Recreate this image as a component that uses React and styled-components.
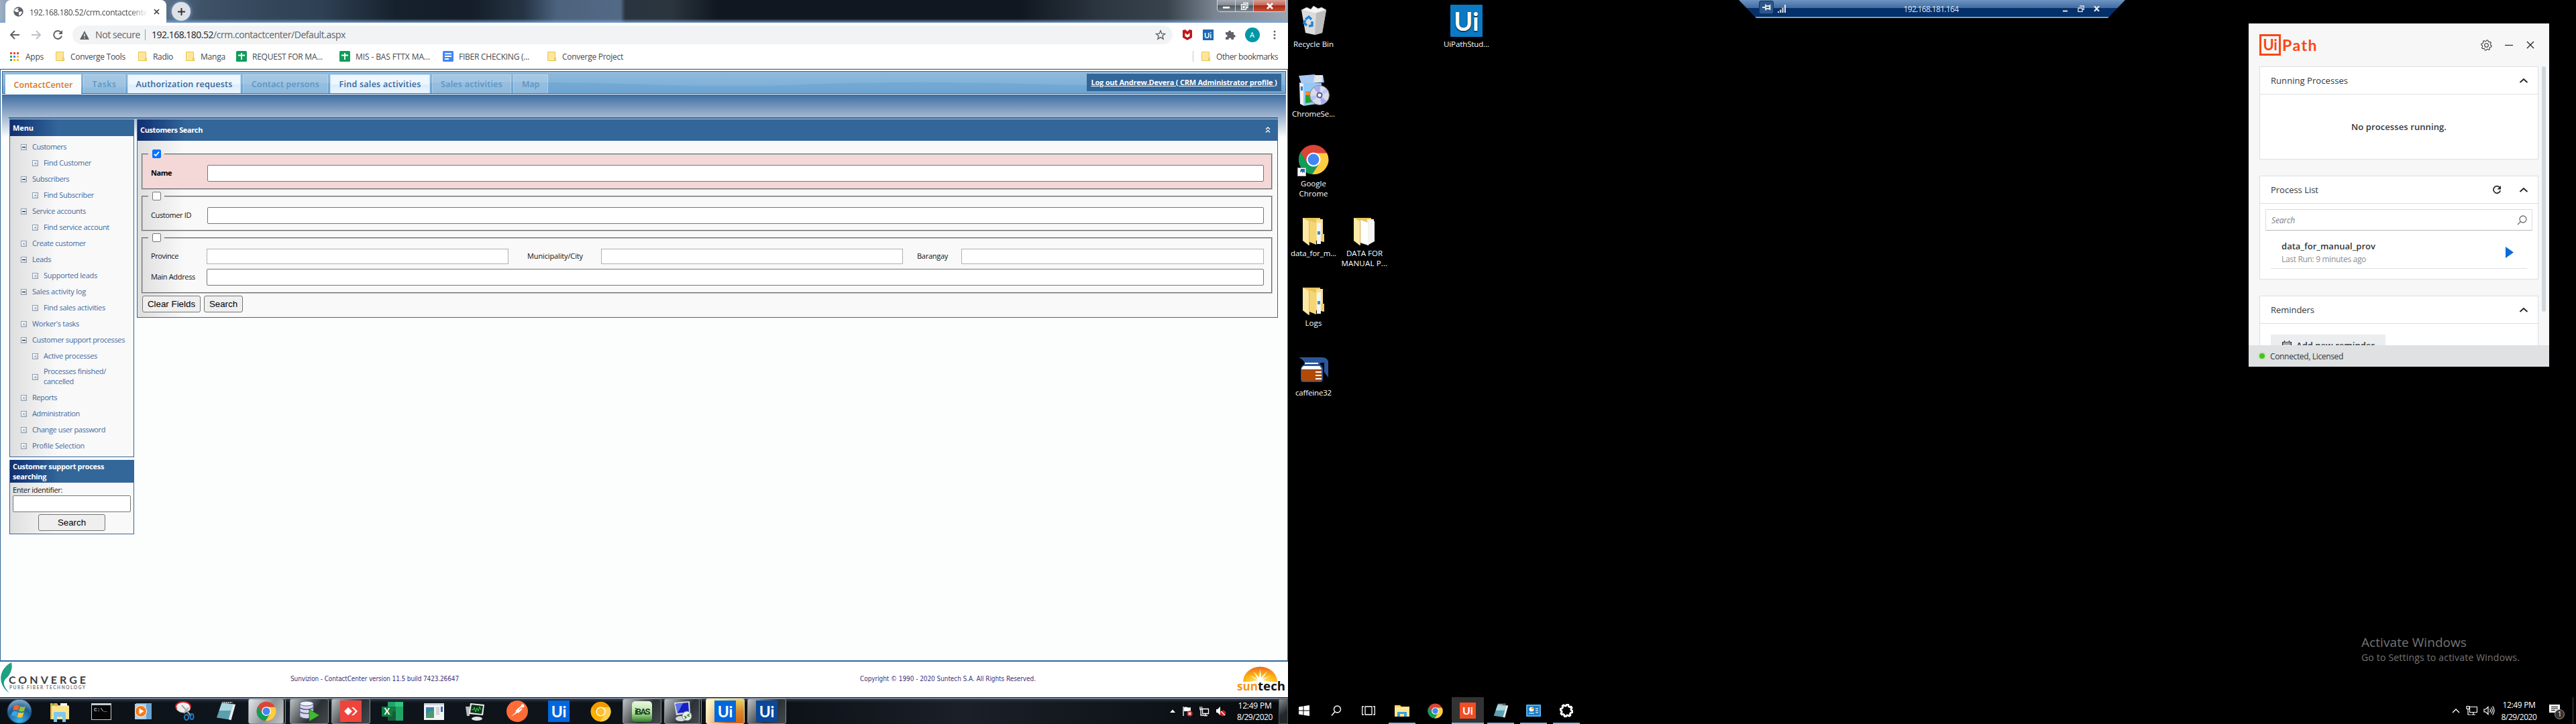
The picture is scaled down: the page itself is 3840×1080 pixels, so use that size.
import React, { useLayoutEffect, useRef } from "react";
import styled, { createGlobalStyle, css } from "styled-components";

const Global = createGlobalStyle`
  * { box-sizing: border-box; }
  body { margin: 0; background: #000; font-family: "Open Sans", "Noto Sans", sans-serif; }
`;

/* ---------- text that tracks itself to a given measure ---------- */
const TextSpan = styled.span`
  display: inline-block;
  width: max-content;
  white-space: nowrap;
  flex: none;
  line-height: ${(p) => p.$lh || 15}px;
  font-size: ${(p) => p.$size || 12}px;
  font-weight: ${(p) => p.$weight || 400};
  color: ${(p) => p.$color || "inherit"};
  font-style: ${(p) => (p.$italic ? "italic" : "normal")};
  font-family: ${(p) => p.$font || "inherit"};
`;
function Text({ w, size, weight, color, italic, font, lh, children }) {
  const ref = useRef(null);
  useLayoutEffect(() => {
    const el = ref.current;
    if (!w || !el) return;
    el.style.letterSpacing = "0px";
    const n = el.textContent.length;
    const natural = el.getBoundingClientRect().width;
    const gap = (w - natural) / n;
    el.style.letterSpacing = gap.toFixed(3) + "px";
  }, [w, children]);
  return (
    <TextSpan ref={ref} $size={size} $weight={weight} $color={color} $italic={italic} $font={font} $lh={lh}>
      {children}
    </TextSpan>
  );
}

/* ---------- shared drawings ---------- */
const Svg = ({ w = 16, h, vb, children }) => (
  <svg width={w} height={h || w} viewBox={vb || `0 0 ${w} ${h || w}`} display="block">
    {children}
  </svg>
);
const ChromeIcon = ({ size = 32, canary }) => {
  const c = canary ? ["#f29900", "#f9b200", "#fdd04e", "#fbc02d"] : ["#db4437", "#0f9d58", "#ffcd40", "#4285f4"];
  return (
    <Svg w={size} vb="0 0 48 48">
      <circle cx="24" cy="24" r="23" fill={c[0]} />
      <path d="M4 12.5 A23 23 0 0 0 22 46.9 L33 29 L24 24 L14 29 Z" fill={c[1]} />
      <path d="M45 14 A23 23 0 0 1 22 46.9 L33.5 29.5 L33 19 L24 14 Z" fill={c[2]} />
      <circle cx="24" cy="24" r="11" fill="#fff" />
      <circle cx="24" cy="24" r="8.8" fill={c[3]} />
    </Svg>
  );
};
const NotepadIcon = ({ size = 32 }) => (
  <Svg w={size} vb="0 0 32 32">
    <path d="M12 3 L31 5 L24 30 L20 29 Z" fill="#e9edf0" />
    <path d="M9 3 L27 5 L20 29 L1 26 Z" fill="#5b9fb0" />
    <path d="M9 3 L27 5 L24 15 L5 15 Z" fill="#a9d6dc" />
    <path d="M10 2 h16" stroke="#ddd" strokeWidth="2" strokeDasharray="2 1" />
  </Svg>
);
const ExplorerIcon = ({ size = 32 }) => (
  <Svg w={size} vb="0 0 32 32">
    <path d="M2 4 h10 l2 3 h15 v21 H2 Z" fill="#d9b14c" />
    <path d="M4 8 h26 v20 H4 Z" fill="#fbe38e" />
    <path d="M17 4 h10 v4 H17 Z" fill="#f6f6f6" />
    <path d="M5 4 h3 v2 H5 Z" fill="#3aa03a" />
    <path d="M7 32 V19 q0-2 2-2 h14 q2 0 2 2 V32 h-5 v-8 h-8 v8 Z" fill="#7cc8ee" />
  </Svg>
);

/* ---------- screens ---------- */
const Desk = styled.div`display: flex; width: 3840px; height: 1080px; overflow: hidden; background: #000;`;
const LeftScreen = styled.div`width: 1920px; height: 1080px; display: flex; flex-direction: column; background: #fff; overflow: hidden;`;

/* ---------- browser chrome ---------- */
const TitleBar = styled.div`
  height: 34px; display: flex; align-items: flex-start; padding-left: 8px;
  background:
    linear-gradient(180deg, transparent 28px, rgba(120, 165, 215, 0.75) 33px, #8fb0d2 34px),
    linear-gradient(90deg, #9fb0c2 0, #8ea4bd 8px, #5a6f86 250px, #3e5268 300px, #34465a 400px, #2e4054 480px, #16212d 590px,
      #141d28 700px, #253444 780px, #4c627d 830px, #536a86 925px, #2a343f 932px, #2b353e 1000px, #101720 1070px,
      #101720 1520px, #2c3640 1640px, #39434d 1740px, #7a8490 1810px, #9aa5b1 1920px);
`;
const Tab = styled.div`
  width: 240px; height: 34px; background: #fff; border-radius: 8px 8px 0 0;
  display: flex; align-items: center; gap: 9px; padding: 0 0 0 12px; color: #45494d;
`;
const TabTitle = styled.div`width: 176px; overflow: hidden; mask-image: linear-gradient(90deg, #000 150px, transparent 176px);`;
const NewTab = styled.div`
  width: 28px; height: 28px; margin: 3px 0 0 8px; border-radius: 50%; background: #dee1e6;
  display: flex; align-items: center; justify-content: center; box-shadow: 0 0 5px 1px #6f9ccb;
`;
const WinButtons = styled.div`
  display: flex; margin-left: auto; margin-right: 3px; height: 18px; border: 1px solid #d5dbe2; border-top: 0; border-radius: 0 0 5px 5px; overflow: hidden;
`;
const WinButton = styled.div`
  width: ${(p) => (p.$close ? 47 : 27)}px; display: flex; align-items: center; justify-content: center;
  border-right: ${(p) => (p.$close ? 0 : "1px solid #c7ced6")};
  background: ${(p) => p.$close ? "linear-gradient(#d9a095, #c4685a 45%, #a92b16 50%, #c9503a)" : "linear-gradient(#a7adb4, #828a93 45%, #505961 50%, #79838c)"};
`;
const AddressRow = styled.div`height: 36px; display: flex; align-items: center; padding-left: 14px; gap: 16px; background: #fff;`;
const Omnibox = styled.div`
  width: 1640px; height: 28px; margin-left: -2px; border-radius: 14px; background: #f1f3f4; display: flex; align-items: center; padding: 0 10px 0 11px; color: #5f6368;
`;
const OmniSeparator = styled.div`width: 1px; height: 16px; background: #9aa0a6; margin: 0 9px 0 7px;`;
const WarnBox = styled.div`width: 23px;`;
const Push = styled.div`margin-left: auto;`;
const Extensions = styled.div`display: flex; align-items: center; margin-left: -1px; height: 28px;`;
const ExtSlot = styled.div`width: ${(p) => p.$w}px; display: flex; justify-content: center;`;
const Avatar = styled.div`width: 22px; height: 22px; border-radius: 50%; background: #0097a7; color: #fff; font-size: 11px; line-height: 22px; text-align: center;`;
const UiTile = styled.div`
  width: ${(p) => p.$s}px; height: ${(p) => p.$s}px; background: ${(p) => p.$bg}; color: #fff; display: flex; align-items: center; justify-content: center; flex: none;
  font: 700 ${(p) => p.$f || p.$s * 0.68}px/1 "Lato", "Open Sans", sans-serif; border-radius: ${(p) => p.$r || 0}px;
`;
const BookmarkBar = styled.div`height: 33px; padding: 0 15px; border-bottom: 1px solid #d6d8dc; display: flex; align-items: center; color: #45494d; background: #fff; padding-bottom: 4px;`;
const Bookmark = styled.div`display: flex; align-items: center; width: ${(p) => p.$w}px; gap: ${(p) => p.$gap}px;`;
const BookDivider = styled.div`margin-left: auto; width: 1px; height: 16px; background: #c4c7cb; margin-right: 12px;`;

const Folder = () => (
  <Svg w={13} h={14}><path d="M.5 .5 h11 v10 l1 1 v2 H.5Z" fill="#ffe69b" stroke="#e8c64e" /><path d="M10.5 13 v-3.5 h2 v4z" fill="#ffe69b" stroke="#e3b736" strokeWidth=".8" /></Svg>
);
const Sheet = () => (
  <Svg w={16}><rect width="16" height="16" rx="1.5" fill="#0f9d58" /><path d="M3 6.5 h10 M8 3 v10" stroke="#fff" strokeWidth="1.8" /></Svg>
);
const Doc = () => (
  <Svg w={16}><rect width="16" height="16" rx="1.5" fill="#4285f4" /><path d="M3 4.2h10M3 8h10M3 12h6" stroke="#fff" strokeWidth="1.8" /></Svg>
);
const AppsGrid = () => (
  <Svg w={13}>
    {["#ea4335", "#ea4335", "#ea4335", "#34a853", "#4285f4", "#fbbc04", "#34a853", "#fbbc04", "#fbbc04"].map((c, i) => (
      <rect key={i} x={(i % 3) * 5} y={Math.floor(i / 3) * 5} width="3" height="3" fill={c} />
    ))}
  </Svg>
);
const bookmarks = [
  ["Apps", 27, AppsGrid, 68, 10], ["Converge Tools", 82, Folder, 123, 9], ["Radio", 30, Folder, 71, 9], ["Manga", 37, Folder, 75, 9],
  ["REQUEST FOR MA...", 105, Sheet, 154, 8], ["MIS - BAS FTTX MA...", 111, Sheet, 154, 8], ["FIBER CHECKING (...", 105, Doc, 156, 8], ["Converge Project", 91, Folder, 120, 9],
];

/* ---------- CRM page ---------- */
const Page = styled.div`height: 882px; border: 1px solid #336699; border-bottom: 0; padding: 2px 2px 0; background: #fcfefe; display: flex; flex-direction: column;`;
const Strip = styled.div`
  height: 34px; border: 1px solid #336699; display: flex; align-items: flex-end; position: relative; background: linear-gradient(#8fbadc, #84b3d9 50%, #6fa8d4);
  flex: none;
`;
const Wave = styled.svg`position: absolute; left: 0; top: 0;`;
const NavTabs = styled.div`display: flex; align-items: flex-end; gap: 3px; padding-left: 4px; position: relative; height: 100%;`;
const NavTab = styled.div`
  width: ${(p) => p.$w}px; height: ${(p) => (p.$kind === "active" ? 29 : 28)}px; display: flex; justify-content: center; align-items: center;
  border: solid rgba(255, 255, 255, 0.25); border-width: 1px 1px 0 1px;
  ${(p) => p.$kind === "active" && css`background: #fafdfe; color: #e0751a; margin-bottom: -1px; border-color: #fff;`}
  ${(p) => p.$kind === "on" && css`background: linear-gradient(#eef6fe 50%, #dcecfb 52%, #e9f4fe); color: #336699; border-color: #c5e0f5;`}
  ${(p) => p.$kind === "off" && css`background: rgba(255, 255, 255, 0.24); color: #5b96c6;`}
`;
const LogOut = styled.div`margin: 0 6px 3px auto; padding-bottom: 2px; position: relative; width: 290px; height: 26px; background: #336699; display: flex; align-items: center; justify-content: center; text-decoration: underline; color: #fff;`;
const Main = styled.div`
  flex: 1; margin-top: 1px; padding: 34px 12px 0 10px;
  background: linear-gradient(#3e6ea1 0, #a5b8d2 34px, #fcfefe 64px);
`;
const Columns = styled.div`border-top: 2px solid #336699; padding: 1px 0 0 1px; display: flex; gap: 4px; align-items: flex-start; background: linear-gradient(#b7cfe8 1px, transparent 1px);`;
const SideColumn = styled.div`width: 186px; display: flex; flex-direction: column; gap: 4px;`;
const Panel = styled.div`border: 1px solid #336699; border-top: 0; background: linear-gradient(90deg, #dedede 0, #e3e3e3 12px, #f9f9f9 70px); ${(p) => p.$grow && css`flex: 1;`}`;
const PanelHead = styled.div`
  height: ${(p) => p.$h}px; background: linear-gradient(90deg, #11306f 0, #173a7a 15px, #336699 72px); color: #fff; padding: 0 4px 1px;
  display: flex; align-items: center; justify-content: space-between;
`;
const HeadLines = styled.div`display: flex; flex-direction: column;`;
const MenuList = styled.div`padding: 4px 0 4px; display: flex; flex-direction: column; color: #3f6aa0;`;
const MenuRow = styled.div`display: flex; align-items: center; height: ${(p) => (p.$tall ? 38 : 24)}px; padding-left: ${(p) => (p.$sub ? 33 : 16)}px; gap: 8px;`;
const MenuLabel = styled.div`display: flex; flex-direction: column; padding-bottom: 2px;`;
const Bullet = styled.div`width: 9px; height: 9px; border: 1px solid #8d9fb4; background: linear-gradient(135deg, #fff, #c9ced6); display: flex; align-items: center; justify-content: center;`;
const BulletMark = styled.div`width: ${(p) => (p.$minus ? 5 : 1)}px; height: 1px; background: #000;`;
const SearchBody = styled.div`padding: 4px 4px; display: flex; flex-direction: column; height: 76px;`;
const Field = styled.div`height: ${(p) => p.$h || 25}px; width: ${(p) => (p.$w ? p.$w + "px" : "auto")}; flex: ${(p) => (p.$w ? "none" : 1)}; border: 1px solid ${(p) => (p.$pale ? "#b0b0b0" : "#767676")}; background: #fff; border-radius: ${(p) => (p.$pale ? 0 : 2)}px;`;
const Button = styled.div`
  width: ${(p) => p.$w}px; height: 25px; border: 1px solid #767676; border-radius: 3px; background: #efefef; color: #000;
  font: 13.33px/23px "Liberation Sans", Arial, sans-serif; text-align: center;
`;
const SideField = styled.div`display: flex; height: 25px; margin: 1px 0 3px;`;
const Center = styled.div`display: flex; justify-content: center;`;
const Form = styled.div`padding: 13px 7px 7px 6px; display: flex; flex-direction: column; gap: 3px;`;
const Group = styled.fieldset`
  margin: 0; padding: 10px 11px 0 12px; height: ${(p) => p.$h}px; border: 2px groove #c0c0c0; ${(p) => p.$hot && css`background: #f4d8d8;`}
`;
const Legend = styled.legend`margin-left: -4px; padding: 0 5px 0 6px; height: 13px; background: transparent; line-height: 0;`;
const Check = styled.div`width: 13px; height: 13px; border-radius: 2px; border: 1px solid ${(p) => (p.$on ? "#0075ff" : "#767676")}; background: ${(p) => (p.$on ? "#0075ff" : "#fff")};`;
const FormRow = styled.div`display: flex; align-items: center; height: ${(p) => p.$h || 25}px; margin-bottom: 7px;`;
const LabelBox = styled.div`width: ${(p) => p.$w}px; padding: 0 0 3px ${(p) => p.$pl || 0}px; flex: none; color: #111; display: flex;`;
const ButtonRow = styled.div`display: flex; gap: 5px; padding-left: 1px;`;
const FooterLine = styled.div`height: 2px; background: #336699;`;
const Footer = styled.div`height: 53px; background: #fff; display: flex; align-items: center; color: #40347e;`;
const FooterLogo = styled.div`width: 433px; height: 53px;`;
const FooterMid = styled.div`width: 849px; padding-bottom: 2px; display: flex;`;
const FooterCopy = styled.div`padding-bottom: 2px; display: flex;`;
const FooterEnd = styled.div`margin-left: auto; width: 76px; height: 53px;`;

const menu = [
  ["Customers", 51, 0, 1], ["Find Customer", 71, 1], ["Subscribers", 55, 0, 1], ["Find Subscriber", 75, 1], ["Service accounts", 80, 0, 1],
  ["Find service account", 98, 1], ["Create customer", 80, 0], ["Leads", 28, 0, 1], ["Supported leads", 80, 1], ["Sales activity log", 80, 0, 1],
  ["Find sales activities", 92, 1], ["Worker's tasks", 70, 0], ["Customer support processes", 138, 0, 1], ["Active processes", 80, 1],
  [["Processes finished/", "cancelled"], [93, 45], 1], ["Reports", 37, 0], ["Administration", 71, 0], ["Change user password", 109, 0], ["Profile Selection", 78, 0],
];
const navTabs = [
  ["ContactCenter", 113, 88, "active"], ["Tasks", 63, 36, "off"], ["Authorization requests", 169, 144, "on"], ["Contact persons", 127, 101, "off"],
  ["Find sales activities", 149, 122, "on"], ["Sales activities", 118, 92, "off"], ["Map", 52, 26, "off"],
];
const tahoma = '"DejaVu Sans Condensed", "DejaVu Sans", sans-serif';

function Menu() {
  return (
    <MenuList>
      {menu.map(([label, w, sub, minus], i) => (
        <MenuRow key={i} $sub={sub} $tall={Array.isArray(label)}>
          <Bullet><BulletMark $minus={minus} /></Bullet>
          <MenuLabel>
            {Array.isArray(label)
              ? label.map((l, j) => <Text key={l} w={w[j]} size={11}>{l}</Text>)
              : <Text w={w} size={11}>{label}</Text>}
          </MenuLabel>
        </MenuRow>
      ))}
    </MenuList>
  );
}

function CustomerForm() {
  return (
    <Form>
      <Group $h={60} $hot>
        <Legend><Check $on><Svg w={11}><path d="M2 5.8 L4.3 8.2 L9 2.5" fill="none" stroke="#fff" strokeWidth="1.8" /></Svg></Check></Legend>
        <FormRow><LabelBox $w={84}><Text w={31} size={11} weight={700} color="#000">Name</Text></LabelBox><Field /></FormRow>
      </Group>
      <Group $h={59}>
        <Legend><Check /></Legend>
        <FormRow><LabelBox $w={84}><Text w={60} size={11}>Customer ID</Text></LabelBox><Field /></FormRow>
      </Group>
      <Group $h={90}>
        <Legend><Check /></Legend>
        <FormRow $h={23}>
          <LabelBox $w={83}><Text w={41} size={11}>Province</Text></LabelBox><Field $w={450} $h={23} $pale />
          <LabelBox $w={138} $pl={28}><Text w={83} size={11}>Municipality/City</Text></LabelBox><Field $w={450} $h={23} $pale />
          <LabelBox $w={87} $pl={21}><Text w={46} size={11}>Barangay</Text></LabelBox><Field $h={23} $pale />
        </FormRow>
        <FormRow><LabelBox $w={83}><Text w={66} size={11}>Main Address</Text></LabelBox><Field /></FormRow>
      </Group>
      <ButtonRow><Button $w={87}>Clear Fields</Button><Button $w={58}>Search</Button></ButtonRow>
    </Form>
  );
}

function Browser() {
  return (
    <>
      <TitleBar>
        <Tab>
          <Svg w={15}><circle cx="7.5" cy="7.5" r="7.2" fill="#5f6368" /><path d="M3 3.5 q3-2 5-1 l-2 2 2 1 -1 2.5 -3 0 -3-2z M8 8 l4-1 1 1 -2 4 -3 1 0-3z" fill="#fff" /></Svg>
          <TabTitle><Text w={176} size={12}>192.168.180.52/crm.contactcente</Text></TabTitle>
          <Svg w={9}><path d="M1 1 8 8M8 1 1 8" stroke="#3c4043" strokeWidth="1.7" /></Svg>
        </Tab>
        <NewTab><Svg w={13}><path d="M6.5 1v11M1 6.5h11" stroke="#2f3236" strokeWidth="2" /></Svg></NewTab>
        <WinButtons>
          <WinButton><Svg w={12} h={10}><rect x=".5" y="5.5" width="11" height="3.5" fill="#fff" stroke="#555" strokeWidth=".7" /></Svg></WinButton>
          <WinButton><Svg w={12}><path d="M4 1.5h7v7h-2M1.5 4h7v7h-7zM4 6.5h2v2H4z" fill="none" stroke="#fff" strokeWidth="1.4" /></Svg></WinButton>
          <WinButton $close><Svg w={12} h={10}><path d="M2 1 10 9M10 1 2 9" stroke="#fff" strokeWidth="2.6" /></Svg></WinButton>
        </WinButtons>
      </TitleBar>
      <AddressRow>
        <Svg w={16}><path d="M15 8H2M8 2 2 8l6 6" fill="none" stroke="#5f6368" strokeWidth="2" /></Svg>
        <Svg w={16}><path d="M1 8h13M8 2l6 6-6 6" fill="none" stroke="#bdc1c6" strokeWidth="2" /></Svg>
        <Svg w={16}><path d="M13.2 4.6A6 6 0 1 0 14 9.6" fill="none" stroke="#5f6368" strokeWidth="2" /><path d="M15 1v6H9z" fill="#5f6368" /></Svg>
        <Omnibox>
          <WarnBox><Svg w={14} h={13}><path d="M7 0 14 13H0z" fill="#5f6368" /><path d="M7 4.5v4M7 10v1.6" stroke="#f1f3f4" strokeWidth="1.5" /></Svg></WarnBox>
          <Text w={67} size={14} lh={20}>Not secure</Text>
          <OmniSeparator />
          <Text w={92} size={14} lh={20} color="#202124">192.168.180.52</Text>
          <Text w={197} size={14} lh={20}>/crm.contactcenter/Default.aspx</Text>
          <Push><Svg w={16}><path d="M8 1.8 9.8 6.2 14.5 6.5 10.9 9.5 12.1 14.2 8 11.6 3.9 14.2 5.1 9.5 1.5 6.5 6.2 6.2z" fill="none" stroke="#5f6368" strokeWidth="1.4" /></Svg></Push>
        </Omnibox>
        <Extensions>
          <ExtSlot $w={14}><Svg w={14} h={16}><path d="M0 1 4 0 7 3 10 0 14 1V12L7 16 0 12zM3.5 5v5L7 12l3.5-2V5L7 8z" fill="#c01818" fillRule="evenodd" /></Svg></ExtSlot>
          <ExtSlot $w={47}><UiTile $s={16} $bg="#1f69b3" $f={11}>Ui</UiTile></ExtSlot>
          <ExtSlot $w={20}><Svg w={16}><path d="M1 4h4.2a2 2 0 1 1 3.8 0H13v4a2 2 0 1 1 0 3.8V15H9.4a2 2 0 1 0-3.8 0H1v-3.6a2 2 0 1 0 0-3.8z" fill="#5f6368" /></Svg></ExtSlot>
          <ExtSlot $w={45}><Avatar>A</Avatar></ExtSlot>
          <ExtSlot $w={22}><Svg w={4} h={16}><circle cx="2" cy="3" r="1.5" fill="#5f6368" /><circle cx="2" cy="8" r="1.5" fill="#5f6368" /><circle cx="2" cy="13" r="1.5" fill="#5f6368" /></Svg></ExtSlot>
        </Extensions>
      </AddressRow>
      <BookmarkBar>
        {bookmarks.map(([label, w, Icon, slot, gap]) => (
          <Bookmark key={label} $w={slot} $gap={gap}><Icon /><Text w={w} size={12}>{label}</Text></Bookmark>
        ))}
        <BookDivider />
        <Bookmark $w={114} $gap={9}><Folder /><Text w={92} size={12}>Other bookmarks</Text></Bookmark>
      </BookmarkBar>
      <Page>
        <Strip>
          <Wave width="1912" height="32"><path d="M0 22 Q100 26 260 21 T700 16 Q830 14 960 19 T1200 19 Q1350 13 1520 18 T1912 20 V32 H0z" fill="#6aa3d2" opacity=".55" /></Wave>
          <NavTabs>
            {navTabs.map(([label, w, tw, kind]) => (
              <NavTab key={label} $w={w} $kind={kind}><Text w={tw} size={12.5} weight={600}>{label}</Text></NavTab>
            ))}
          </NavTabs>
          <LogOut><Text w={277} size={11} weight={700}>Log out Andrew.Devera ( CRM Administrator profile )</Text></LogOut>
        </Strip>
        <Main>
          <Columns>
            <SideColumn>
              <Panel><PanelHead $h={25}><Text w={31} size={11} weight={700}>Menu</Text></PanelHead><Menu /></Panel>
              <Panel>
                <PanelHead $h={34}><HeadLines><Text w={136} size={11} weight={700}>Customer support process</Text><Text w={50} size={11} weight={700}>searching</Text></HeadLines></PanelHead>
                <SearchBody>
                  <Text w={74} size={11} lh={14} color="#111">Enter identifier:</Text>
                  <SideField><Field /></SideField>
                  <Center><Button $w={100}>Search</Button></Center>
                </SearchBody>
              </Panel>
            </SideColumn>
            <Panel $grow>
              <PanelHead $h={32}>
                <Text w={93} size={11} weight={700}>Customers Search</Text>
                <Svg w={20} h={12}><path d="M7 5 10 2 13 5M7 9.5 10 6.5 13 9.5" fill="none" stroke="#fff" strokeWidth="1.4" /></Svg>
              </PanelHead>
              <CustomerForm />
            </Panel>
          </Columns>
        </Main>
      </Page>
      <FooterLine />
      <Footer>
        <FooterLogo>
          <Svg w={140} h={53}>
            <defs><linearGradient id="leaf" x1="0" y1="0" x2="0" y2="1"><stop offset="0" stopColor="#2d9c7c" /><stop offset=".6" stopColor="#12a586" /><stop offset="1" stopColor="#0b7c8c" /></linearGradient></defs>
            <path d="M17 1 C-3 12 -4 34 14 47 C5 37 4 31 8 26 C17 18 19 9 17 1Z" fill="url(#leaf)" />
            <text x="13" y="32.500" fontFamily="Lato, sans-serif" fontWeight="700" fontSize="16" fill="#3c3c40" textLength="115">CONVERGE</text>
            <text x="14" y="41" fontFamily="Lato, sans-serif" fontWeight="700" fontSize="6.500" fill="#777" textLength="113">PURE FIBER TECHNOLOGY</text>
          </Svg>
        </FooterLogo>
        <FooterMid><Text w={251} size={10} font={tahoma}>Sunvizion - ContactCenter version 11.5 build 7423.26647</Text></FooterMid>
        <FooterCopy><Text w={262} size={10} font={tahoma}>Copyright © 1990 - 2020 Suntech S.A. All Rights Reserved.</Text></FooterCopy>
        <FooterEnd>
          <Svg w={76} h={53}>
            <defs><radialGradient id="sun" cx=".5" cy="1" r="1"><stop offset="0" stopColor="#fff3a0" /><stop offset=".45" stopColor="#fdb913" /><stop offset="1" stopColor="#f0651f" /></radialGradient></defs>
            <path d="M9 30 A25 22 0 0 1 60 30Z" fill="url(#sun)" />
            <path d="M34.500 30 L18 20 L31 26 L24 14 L33 24 L34.500 11 L36 24 L45 14 L38 26 L51 20Z M20 30 l14-3 15 3z" fill="#fff" />
            <text x="0" y="43" fontFamily="Open Sans, sans-serif" fontWeight="700" fontSize="18" fill="#f7941d" textLength="31" lengthAdjust="spacingAndGlyphs">sun</text>
            <text x="31" y="43" fontFamily="Open Sans, sans-serif" fontWeight="700" fontSize="18" fill="#111" textLength="41" lengthAdjust="spacingAndGlyphs">tech</text>
          </Svg>
        </FooterEnd>
      </Footer>
    </>
  );
}

/* ---------- Windows 7 taskbar ---------- */
const Taskbar7 = styled.div`
  height: 40px; border-top: 1px solid #11161c; display: flex; align-items: center; color: #fff;
  background: linear-gradient(#8d99a8 1px, #2b3644 2px, transparent 7px), linear-gradient(90deg, #0a0f15, #10161d 20%, #0c1117 60%, #1b2028 75%, #0c1116 92%, #060709);
`;
const Slot7 = styled.div`width: ${(p) => p.$w || 62}px; height: 39px; display: flex; align-items: center; justify-content: center; padding: 1px 2px 0; flex: none;`;
const RunButton = styled.div`
  width: 58px; height: 38px; display: flex; align-items: center; justify-content: center; border-radius: 3px; border: 1px solid #7f8890;
  background: ${(p) => p.$hue === "gold" ? "linear-gradient(100deg, #fffbd8, transparent 60%), linear-gradient(#e8d768, #d8882b 50%, #cf6416)" : p.$hue === "bright" ? "linear-gradient(120deg, #e5e8ea, #8d9296 55%, #c3c7c9)" : "linear-gradient(125deg, #c0c3c5, #53585c 42%, #2b3035 60%, #454a4f)"};
  border-color: ${(p) => (p.$hue === "gold" ? "#f8dc9c" : "#868c92")};
  box-shadow: ${(p) => (p.$stack ? "3px 0 0 -1px #1b1f24, 3px 0 0 0 #868c92" : "none")};
  ${(p) => p.$stack && css`width: 53px; margin-right: 5px;`}
`;
const Tray7 = styled.div`margin-left: auto; display: flex; align-items: center; height: 39px;`;
const TrayIcons = styled.div`display: flex; align-items: center; gap: 9px; width: 101px;`;
const Clock = styled.div`display: flex; flex-direction: column; align-items: center; width: ${(p) => p.$w}px; gap: ${(p) => p.$gap}px; color: #fff; flex: none;`;
const ShowDesktop = styled.div`width: 14px; height: 38px; margin-left: 9px; border: 1px solid #4b525a; background: linear-gradient(145deg, #858a8f, #23272b 60%);`;
const Ibas = styled.div`
  width: 30px; height: 31px; border-radius: 5px; background: linear-gradient(#e9f8e2, #b5e29d 55%, #2d7d26); display: flex; align-items: center; justify-content: center; color: #16401c;
`;

const appIcons = [
  { w: 58, el: <Svg w={38} vb="0 0 38 38"><defs><radialGradient id="orb" cx=".5" cy=".9" r=".9"><stop offset="0" stopColor="#37b7ee" /><stop offset=".6" stopColor="#1c5a93" /><stop offset="1" stopColor="#8fb0cb" /></radialGradient></defs><circle cx="19" cy="19" r="18" fill="url(#orb)" stroke="#24425f" /><path d="M11 11q4-3 8 0l-2 7q-4-2-8 0z" fill="#f0652f" /><path d="M20 11.500q4 2 8 0l-2 7q-4 2-8 0z" fill="#8bc53f" /><path d="M8.500 20q4-3 8 0l-2 7q-4-3-8 0z" fill="#3aa5e8" /><path d="M17.500 20.500q4 2 8 0l-2 7q-4 2-8 0z" fill="#fdc52c" /></Svg> },
  { el: <ExplorerIcon size={32} /> },
  { el: <Svg w={30} h={25}><rect width="30" height="25" fill="#c9cdd1" /><rect x="1" y="3" width="28" height="21" fill="#050505" /><text x="4" y="12" fontFamily="Liberation Mono, monospace" fontSize="8" fill="#fff">C:\_</text></Svg> },
  { el: <Svg w={26} h={26}><path d="M3 1 22 3V25L3 25z" fill="#9fc6e4" /><path d="M7 1h19v24H8z" fill="#6aa3d0" /><path d="M1 2h17v23H1z" fill="#a6d2ee" /><circle cx="10" cy="13" r="8.500" fill="#f47b20" stroke="#fff" /><path d="M7.500 8.500v9l7-4.500z" fill="#fff" /></Svg> },
  { el: <Svg w={30}><ellipse cx="13" cy="8" rx="11" ry="7" fill="#f3f3f3" stroke="#cf1f2b" strokeWidth="2" /><path d="M4 8v5q9 8 19 0V8" fill="#ececec" stroke="#c9c9c9" /><path d="M11 6 25 22M14 18 21 10" stroke="#aaa" strokeWidth="2" /><ellipse cx="18" cy="24" rx="3" ry="4" fill="none" stroke="#2778bd" strokeWidth="2" /><ellipse cx="26" cy="23" rx="2.500" ry="4" fill="none" stroke="#2778bd" strokeWidth="2" /></Svg> },
  { el: <NotepadIcon size={30} /> },
  { run: "bright", stack: true, el: <ChromeIcon size={30} /> },
  { run: "dark", el: <Svg w={32}><path d="M2 4v20q10 6 20 0V4z" fill="#d7d9ec" stroke="#5d5f90" /><ellipse cx="12" cy="4.500" rx="10" ry="3.500" fill="#f0f1fa" stroke="#5d5f90" /><path d="M2 11q10 5 20 0M2 17q10 5 20 0" fill="none" stroke="#5d5f90" strokeWidth="1.500" /><path d="M16 13 31 22 16 31z" fill="#44b833" stroke="#1f6e1a" /></Svg> },
  { run: "dark", el: <Svg w={32}><rect width="32" height="32" fill="#ef443b" /><path d="M12 10 18 16 12 22 6 16zM17 10h3l6 6-6 6h-3l6-6z" fill="#fff" /></Svg> },
  { el: <Svg w={32} h={28}><path d="M9 0h23v28H9z" fill="#21a366" /><path d="M20 0h12v7H20z" fill="#33c481" /><path d="M9 14h12v14H9z" fill="#185c37" /><path d="M9 7h12v7H9z" fill="#107c41" /><rect y="7" width="16" height="15" rx="1" fill="#107c41" /><text x="3.500" y="19" fontFamily="Lato, sans-serif" fontWeight="700" fontSize="13" fill="#fff">X</text></Svg> },
  { el: <Svg w={30} h={25}><rect width="30" height="25" fill="#f3f4f5" /><rect width="30" height="3" fill="#cfd4da" /><rect x="3" y="6" width="12" height="16" fill="#3d82a8" /><path d="M3 22q0-10 12-12v12z" fill="#4a9b6e" /><path d="M18 7h5M18 10h5M18 13h5M18 16h5" stroke="#999" /><rect x="25" y="5" width="3" height="8" fill="#2f6cb1" /></Svg> },
  { el: <Svg w={30}><path d="M0 8h6v14H2z" fill="#b8bcbf" /><path d="M7 3 28 5 26 21 5 19z" fill="#eceeee" /><path d="M9 5 26 7 24 19 7 17z" fill="#12301b" /><path d="M9 12l3 1 1-4 2 7 2-6 2 5 2-7 2 5" fill="none" stroke="#2fd14c" /><ellipse cx="17" cy="26" rx="8" ry="3" fill="#e0e2e3" /></Svg> },
  { el: <Svg w={32}><circle cx="16" cy="16" r="16" fill="#ff6c37" /><path d="M7 24 18 13 21 15z" fill="#fff" /><path d="M14 16 22 9M17 18 23 12" stroke="#fff" strokeWidth="2" /><circle cx="24" cy="8" r="2.500" fill="#fff" /></Svg> },
  { el: <UiTile $s={32} $bg="#0067df" $f={23}>Ui</UiTile> },
  { el: <ChromeIcon size={31} canary /> },
  { run: "dark", el: <Ibas><Text w={22} size={13} weight={700} font='"Roboto", sans-serif'>iBAS</Text></Ibas> },
  { run: "dark", stack: true, el: <Svg w={30}><path d="M3 2 26 0 27 18 6 21z" fill="#d4d8da" /><path d="M5 4 24 2 25 16 8 18z" fill="#1420c4" /><path d="M5 4 16 3 8 18z" fill="#5b73ee" /><ellipse cx="13" cy="26" rx="8" ry="4" fill="#d4d8da" /><circle cx="22" cy="22" r="7" fill="#eee" stroke="#888" /><path d="M18 22l3 2-2 2M26 19l-3 2 3 2" fill="none" stroke="#2f9a35" strokeWidth="1.800" /></Svg> },
  { run: "gold", el: <UiTile $s={32} $bg="#0067df" $f={23}>Ui</UiTile> },
  { run: "dark", el: <UiTile $s={32} $bg="#0a479a" $f={23}>Ui</UiTile> },
];

function TaskbarSeven() {
  return (
    <Taskbar7>
      {appIcons.map((a, i) => (
        <Slot7 key={i} $w={a.w}>{a.run ? <RunButton $hue={a.run} $stack={a.stack}>{a.el}</RunButton> : a.el}</Slot7>
      ))}
      <Tray7>
        <TrayIcons>
          <Svg w={10} h={6}><path d="M1 5 5 .5 9 5z" fill="#fff" /></Svg>
          <Svg w={16}><path d="M2 1v14" stroke="#fff" strokeWidth="1.300" /><path d="M3 2q3-1 5 0t5 0v6H3z" fill="#fff" /><circle cx="11.500" cy="11.500" r="4.300" fill="#d21f1f" /><path d="M9.700 9.700l3.600 3.600M13.300 9.700l-3.600 3.600" stroke="#fff" strokeWidth="1.300" /></Svg>
          <Svg w={16}><path d="M5.500 4.500h9v7h-9zM8 14.500h5M10 12v2M2 1v4M4.500 1v3M1 5h4M3 5v9h5" fill="none" stroke="#fff" strokeWidth="1.300" /></Svg>
          <Svg w={16}><path d="M1 5h2l4-4v13l-4-4H1z" fill="#fff" /><circle cx="11" cy="11" r="4.300" fill="#d21f1f" /><path d="M8 8l6 6" stroke="#fff" strokeWidth="1.300" /></Svg>
        </TrayIcons>
        <Clock $w={53} $gap={2}><Text w={50} size={12}>12:49 PM</Text><Text w={53} size={12}>8/29/2020</Text></Clock>
        <ShowDesktop />
      </Tray7>
    </Taskbar7>
  );
}

/* ---------- remote desktop ---------- */
const RightScreen = styled.div`width: 1920px; height: 1080px; background: #000; position: relative; display: flex; flex-direction: column;`;
const DesktopGrid = styled.div`flex: 1; display: grid; grid-template-columns: repeat(4, 76px); grid-auto-rows: 104px;`;
const Shortcut = styled.div`
  grid-column: ${(p) => p.$c}; grid-row: ${(p) => p.$r}; display: flex; flex-direction: column; align-items: center; color: #fff; text-shadow: 0 1px 2px #000; padding-top: 7px;
`;
const IconBox = styled.div`height: 51px; width: 48px; display: flex; align-items: flex-start; justify-content: center; position: relative;`;

const FolderBig = ({ white }) => (
  <Svg w={48}>
    <path d="M8 6h26v34H8z" fill="#e9c55e" /><path d="M28 8h10v30H28z" fill={white ? "#f3f3f3" : "#ffdf8a"} />
    {white ? (<><path d="M18 9l12 4v34l-12-4z" fill="#fff" stroke="#ccc" strokeWidth=".600" /><path d="M30 11h9v30l-9 5z" fill="#f5f5f5" /></>) : (
      <><path d="M29 13h6v32h-6z" fill="#f4f4f4" /><path d="M30 26h4v5h-4z" fill="#3d8fc6" /><path d="M35 30h5v12l-5-1z" fill="#f2ce6b" /><path d="M18 10l10 4v32l-10-4z" fill="#f5d675" /></>)}
    <path d="M8 6l9 5v36L8 40z" fill="#ffe9a6" /><path d="M17 11l1 0v36l-1 0z" fill="#dcb95a" />
  </Svg>
);
const shortcuts = [
  { c: 1, r: 1, t: [["Recycle Bin", 60]], el: <Svg w={48}><path d="M6 8 43 8 37 42 26 45 12 42z" fill="#dcdcdc" /><path d="M28 10 43 8 37 42 26 45z" fill="#bdbdbd" /><path d="M6 8 14 4 20 7 24 2 31 6 36 4 43 8 26 13z" fill="#f4f4f4" stroke="#c8c8c8" strokeWidth=".700" /><path d="M12 22l5-4 4 4M22 25l0 6-5 1M14 31l-4-4 2-4" fill="none" stroke="#1b85dd" strokeWidth="3.500" /></Svg> },
  { c: 1, r: 2, t: [["ChromeSe...", 64]], el: <Svg w={48}><path d="M2 2 26 0 32 9 38 1 40 12 6 14z" fill="#a9c9f5" /><path d="M26 1 38 1 36 12 24 12z" fill="#e3e6ea" /><path d="M3 12 10 14V47L4 44z" fill="#f1f1f1" /><path d="M9 13 36 13V43L9 47z" fill="#8fcaf8" /><path d="M12 25h12v8H12z" fill="#f58a2c" /><path d="M12 31h12v10l-12 2z" fill="#2ca02c" /><path d="M5 18h3v6H5z" fill="#1380e4" /><circle cx="33" cy="31" r="14.500" fill="#d9dbe8" stroke="#77798a" /><path d="M33 31 24 20 34 17zM33 31 44 40 36 45z" fill="#a9a8f3" /><path d="M33 31 19 32 22 40zM33 31 46 26 42 21z" fill="#b7c4fb" /><circle cx="33" cy="31" r="3.500" fill="#fff" stroke="#555a90" strokeWidth="2" /></Svg> },
  { c: 1, r: 3, t: [["Google", 38], ["Chrome", 43]], el: <ChromeIcon size={46} />, arrow: true },
  { c: 1, r: 4, t: [["data_for_m...", 68]], el: <FolderBig /> },
  { c: 2, r: 4, t: [["DATA FOR", 54], ["MANUAL P...", 69]], el: <FolderBig white /> },
  { c: 1, r: 5, t: [["Logs", 25]], el: <FolderBig /> },
  { c: 1, r: 6, t: [["caffeine32", 54]], el: <Svg w={48}><path d="M2 6h34q10 0 10 8v22l-6-8V14h-5l-2 3H12q-2-7-10-11z" fill="#2b579a" /><path d="M11 14h22l-1 3h3q3 3 3 6v15q0 5-4 5H9q-4 0-4-5V23q0-4 5-6z" fill="#2b579a" /><path d="M11 14h20v2H11zM9 19h24q3 3 3 5H6q0-3 3-5z" fill="#fff" /><path d="M6 25h30v13q0 3-3 3H9q-3 0-3-3z" fill="#b24a06" /><path d="M27 28h9M27 33h9M27 38h9" stroke="#fff" strokeWidth="2" /></Svg> },
  { c: 4, r: 1, t: [["UiPathStud...", 68]], el: <UiTile $s={48} $bg="#0b79c4" $f={38} $r={1}>Ui</UiTile> },
];
const ArrowBadge = styled.div`position: absolute; left: 0; bottom: 3px; width: 13px; height: 13px; background: #fff; border: 1px solid #aaa;`;

const RdpBar = styled.div`
  position: absolute; left: 672px; top: 0; width: 576px; height: 27px; padding: 0 38px 1px 30px; display: flex; align-items: center; color: #dfe6ee;
  clip-path: polygon(0 0, 100% 0, 550px 100%, 26px 100%);
  background: linear-gradient(#6d94c2 0, #416b9f 12px, #04306c 12.500px, #04306c 25px, #7d9cc4 25px);
`;
const PinButton = styled.div`width: 22px; height: 20px; margin-top: -4px; border: 1px solid #16345c; border-radius: 3px; background: #2e5788; display: flex; align-items: center; justify-content: center; margin-right: 6px;`;
const RdpTitle = styled.div`flex: 1; display: flex; justify-content: center; margin-left: 20px;`;
const RdpControls = styled.div`display: flex; gap: 14px; align-items: center;`;

/* ---------- UiPath assistant ---------- */
const Assistant = styled.div`
  position: absolute; left: 1432px; top: 35px; width: 448px; height: 512px; background: #f7f7f7; display: flex; flex-direction: column; color: #33373b; overflow: hidden;
`;
const AssistHead = styled.div`height: 64px; flex: none; padding: 0 21px 0 16px; display: flex; align-items: center;`;
const LogoBox = styled.div`width: 32px; height: 32px; border: 3px solid #fa4616; display: flex; align-items: center; justify-content: center; margin-right: 2px;`;
const HeadIcons = styled.div`margin-left: auto; display: flex; align-items: center; gap: 18px;`;
const AssistBody = styled.div`height: 416px; padding-left: 16px; display: flex; gap: 5px; overflow: hidden;`;
const Cards = styled.div`width: 416px; display: flex; flex-direction: column; gap: 24px;`;
const Scroll = styled.div`width: 6px; height: 366px; background: #cfd8dd; border-radius: 3px;`;
const Card = styled.div`border: 1px solid #dcdfe1; background: #fff; height: ${(p) => p.$h}px; flex: none; display: flex; flex-direction: column;`;
const CardHead = styled.div`height: 41px; border-bottom: 1px solid #dcdfe1; padding: 0 14px 0 16px; display: flex; align-items: center; flex: none;`;
const CardTools = styled.div`margin-left: auto; display: flex; gap: 26px; align-items: center;`;
const Empty = styled.div`flex: 1; display: flex; align-items: center; justify-content: center;`;
const SearchBox = styled.div`margin: 8px 8px 0; height: 32px; border: 1px solid #d8dbdd; border-bottom-color: #b7babc; display: flex; align-items: center; justify-content: space-between; padding: 0 7px 0 8px;`;
const Process = styled.div`margin: 11px 16px 0; height: 46px; border-bottom: 1px solid #dcdfe1; padding: 0 20px 2px 16px; display: flex; align-items: center; justify-content: space-between;`;
const ProcessText = styled.div`display: flex; flex-direction: column; gap: 2px;`;
const ReminderButton = styled.div`margin: 16px 0 0 16px; width: 171px; height: 32px; background: #ebedee; display: flex; align-items: center; gap: 7px; padding-left: 17px;`;
const Status = styled.div`height: 32px; background: #dfe1e3; display: flex; align-items: center; padding-left: 16px; gap: 8px;`;
const StatusDot = styled.div`width: 8px; height: 8px; border-radius: 50%; background: #4cc417; box-shadow: 0 0 3px #7fd85c;`;
const ChevronUp = () => <Svg w={14} h={8}><path d="M1.500 7 7 2l5.500 5" fill="none" stroke="#24282b" strokeWidth="2" /></Svg>;
const Gear = ({ size = 17, color = "#33373b", hole = 3, sw = 1.1 }) => (
  <Svg w={size} vb="0 0 18 18">
    <path d={Array.from({ length: 32 }, (_, i) => {
      const a = (i / 32) * Math.PI * 2 + 0.1, r = i % 4 < 2 ? 8.2 : 6.5;
      return `${i ? "L" : "M"}${(9 + r * Math.cos(a)).toFixed(2)} ${(9 + r * Math.sin(a)).toFixed(2)}`;
    }).join("") + "Z"} fill="none" stroke={color} strokeWidth={sw} />
    {hole > 0 && <circle cx="9" cy="9" r={hole} fill="none" stroke={color} strokeWidth={sw} />}
  </Svg>
);

function AssistantWindow() {
  return (
    <Assistant>
      <AssistHead>
        <LogoBox><Text w={21} size={22} weight={700} lh={26} color="#fa4616" font='"Lato", sans-serif'>Ui</Text></LogoBox>
        <Text w={53} size={23} weight={700} lh={26} color="#fa4616" font='"Lato", sans-serif'>Path</Text>
        <HeadIcons>
          <Gear />
          <Svg w={14} h={14}><path d="M1 7.500h12" stroke="#24282b" strokeWidth="1.200" /></Svg>
          <Svg w={14} h={14}><path d="M2 2l10 10M12 2 2 12" stroke="#24282b" strokeWidth="1.400" /></Svg>
        </HeadIcons>
      </AssistHead>
      <AssistBody>
        <Cards>
          <Card $h={139}>
            <CardHead><Text w={115} size={13}>Running Processes</Text><CardTools><ChevronUp /></CardTools></CardHead>
            <Empty><Text w={142} size={13} weight={600}>No processes running.</Text></Empty>
          </Card>
          <Card $h={155}>
            <CardHead>
              <Text w={71} size={13}>Process List</Text>
              <CardTools><Svg w={14}><path d="M11.500 4A5.200 5.200 0 1 0 12.200 8.200" fill="none" stroke="#24282b" strokeWidth="1.700" /><path d="M13 1v5.500H7.500z" fill="#24282b" /></Svg><ChevronUp /></CardTools>
            </CardHead>
            <SearchBox>
              <Text w={35} size={12} italic color="#7a7e82">Search</Text>
              <Svg w={15}><circle cx="9" cy="6" r="5" fill="none" stroke="#6b6f73" strokeWidth="1.300" /><path d="M5.500 9.500 1 14" stroke="#6b6f73" strokeWidth="1.300" /></Svg>
            </SearchBox>
            <Process>
              <ProcessText><Text w={140} size={13} weight={600} lh={17}>data_for_manual_prov</Text><Text w={126} size={12} lh={17} color="#8a8e91">Last Run: 9 minutes ago</Text></ProcessText>
              <Svg w={12} h={17}><path d="M0 0 12 8.500 0 17z" fill="#0a6ae0" /></Svg>
            </Process>
          </Card>
          <Card $h={155}>
            <CardHead><Text w={65} size={13}>Reminders</Text><CardTools><ChevronUp /></CardTools></CardHead>
            <ReminderButton>
              <Svg w={14} h={14}><path d="M.600 2.500h12.800v11H.600zM.600 5h12.800M3.500 0v3M10.500 0v3" fill="none" stroke="#24282b" strokeWidth="1.200" /><path d="M3 7.500h8" stroke="#24282b" strokeDasharray="1 2" /></Svg>
              <Text w={117} size={13} weight={600}>Add new reminder</Text>
            </ReminderButton>
          </Card>
        </Cards>
        <Scroll />
      </AssistBody>
      <Status><StatusDot /><Text w={109} size={12}>Connected, Licensed</Text></Status>
    </Assistant>
  );
}

/* ---------- Windows 10 taskbar ---------- */
const Watermark = styled.div`position: absolute; left: 1600px; top: 945px; display: flex; flex-direction: column; color: #757575;`;
const Taskbar10 = styled.div`height: 40px; display: flex; background: #000; color: #fff;`;
const Slot10 = styled.div`
  width: 48px; height: 40px; margin-right: ${(p) => p.$gap || 0}px; display: flex; align-items: center; justify-content: center; flex: none;
`;
const RunSlot = styled(Slot10)`
  background: linear-gradient(#76b9ed, #76b9ed) bottom center / ${(p) => (p.$active ? 48 : 40)}px 2px no-repeat ${(p) => (p.$active ? "#333" : "transparent")};
`;
const Tray10 = styled.div`margin-left: auto; display: flex; align-items: center; gap: 9px;`;
const NoteBox = styled.div`width: 26px; position: relative; height: 18px; margin-left: 9px;`;
const Badge = styled.div`position: absolute; left: 8px; top: 7px; width: 15px; height: 15px; border-radius: 50%; background: #333; border: 1px solid #999; font-size: 10px; line-height: 13px; text-align: center;`;
const EdgeLine = styled.div`width: 1px; height: 40px; background: #444; margin-right: 4px;`;

function RemoteDesktop() {
  return (
    <RightScreen>
      <DesktopGrid>
        {shortcuts.map((s, i) => (
          <Shortcut key={i} $c={s.c} $r={s.r}>
            <IconBox>{s.el}{s.arrow && <ArrowBadge><Svg w={11}><path d="M2 10Q2 5 6 5V7.500L10 3.500 5 1H4" fill="#2b62a5" /><path d="M4 1h6v6z" fill="#2b62a5" /></Svg></ArrowBadge>}</IconBox>
            {s.t.map(([l, w]) => <Text key={l} w={w} size={11.5}>{l}</Text>)}
          </Shortcut>
        ))}
      </DesktopGrid>
      <RdpBar>
        <PinButton><Svg w={13} h={10}><path d="M0 5h5M5 .500v9M5 3h6v4H5M11.500 1v8" fill="none" stroke="#e8e8e8" strokeWidth="1.800" /></Svg></PinButton>
        <Svg w={12}><path d="M1 12V10M4.300 12V7.500M7.600 12V4.500M11 12V0" stroke="#e8e8e8" strokeWidth="2" /></Svg>
        <RdpTitle><Text w={82} size={12}>192.168.181.164</Text></RdpTitle>
        <RdpControls>
          <Svg w={8} h={10}><path d="M0 8.500h7" stroke="#e8e8e8" strokeWidth="2" /></Svg>
          <Svg w={10}><path d="M3 1h6.500v5H7M1 4h6v5.500H1z" fill="none" stroke="#e8e8e8" strokeWidth="1.300" /></Svg>
          <Svg w={9} h={8}><path d="M1 0 8 8M8 0 1 8" stroke="#e8e8e8" strokeWidth="2.200" /></Svg>
        </RdpControls>
      </RdpBar>
      <AssistantWindow />
      <Watermark><Text w={157} size={19} lh={26}>Activate Windows</Text><Text w={236} size={14} lh={20}>Go to Settings to activate Windows.</Text></Watermark>
      <Taskbar10>
        <Slot10><Svg w={16}><path d="M0 2.500 6.500 1.500V7.500H0zM7.500 1.300 16 0V7.500H7.500zM0 8.500H6.500V14.500L0 13.500zM7.500 8.500H16V16L7.500 14.700z" fill="#fff" /></Svg></Slot10>
        <Slot10><Svg w={16}><circle cx="9.500" cy="6" r="5" fill="none" stroke="#fff" strokeWidth="1.400" /><path d="M6 9.500 1 15.500" stroke="#fff" strokeWidth="1.400" /></Svg></Slot10>
        <Slot10 $gap={2}><Svg w={20} h={16}><path d="M5 2h10v12H5zM3 2H.700v12H3M17 2h2.300v12H17" fill="none" stroke="#fff" strokeWidth="1.300" /></Svg></Slot10>
        <RunSlot $gap={1}><Svg w={22}><path d="M0 3h8l2 2h12v15H0z" fill="#fbd46b" /><path d="M0 6h22v13H0z" fill="#ffe796" /><path d="M4 20v-7h14v7h-4v-4H8v4z" fill="#3aa0e0" /></Svg></RunSlot>
        <Slot10 $gap={1}><ChromeIcon size={23} /></Slot10>
        <RunSlot $active $gap={1}><UiTile $s={24} $bg="#f04e23" $f={16}>Ui</UiTile></RunSlot>
        <RunSlot $gap={1}><NotepadIcon size={23} /></RunSlot>
        <RunSlot $gap={1}><Svg w={22} h={18}><rect width="22" height="18" rx="1" fill="#56b2ea" /><rect x="2" y="2" width="18" height="14" fill="#1c78c4" /><circle cx="8" cy="7" r="3.500" fill="#fff" /><path d="M8 7V3.500a3.500 3.500 0 0 1 3.500 3.500z" fill="#f5a623" /><path d="M4 13h8M14 6h4M14 9h4M14 12h4" stroke="#bfe3fb" strokeWidth="1.600" /></Svg></RunSlot>
        <RunSlot><Gear size={20} color="#fff" hole={0} sw={2.6} /></RunSlot>
        <Tray10>
          <Svg w={12} h={8}><path d="M1 7 6 2l5 5" fill="none" stroke="#fff" strokeWidth="1.400" /></Svg>
          <Svg w={17} h={16}><path d="M5.500 2.500h11v8h-11zM8 14h6M11 11v3M1 1.500h4v4H1zM3 6v8h4" fill="none" stroke="#fff" strokeWidth="1.200" /></Svg>
          <Svg w={17} h={16}><path d="M1 6h2.500L7 2.500v11L3.500 10H1z" fill="none" stroke="#fff" strokeWidth="1.200" /><path d="M9.500 5.500q2 2.500 0 5M11.500 3.500q3.500 4.500 0 9M13.700 1.500q4.500 6.500 0 13" fill="none" stroke="#fff" strokeWidth="1.200" /></Svg>
          <Clock $w={54} $gap={3}><Text w={49} size={12}>12:49 PM</Text><Text w={53} size={12}>8/29/2020</Text></Clock>
          <NoteBox><Svg w={16}><path d="M0 0h16v12h-3v3l-3-3H0z" fill="#fff" /><path d="M3 3.500h10M3 6h10M3 8.500h6" stroke="#000" /></Svg><Badge>1</Badge></NoteBox>
          <EdgeLine />
        </Tray10>
      </Taskbar10>
    </RightScreen>
  );
}

export default function App() {
  return (
    <>
      <Global />
      <Desk>
        <LeftScreen><Browser /><TaskbarSeven /></LeftScreen>
        <RemoteDesktop />
      </Desk>
    </>
  );
}
